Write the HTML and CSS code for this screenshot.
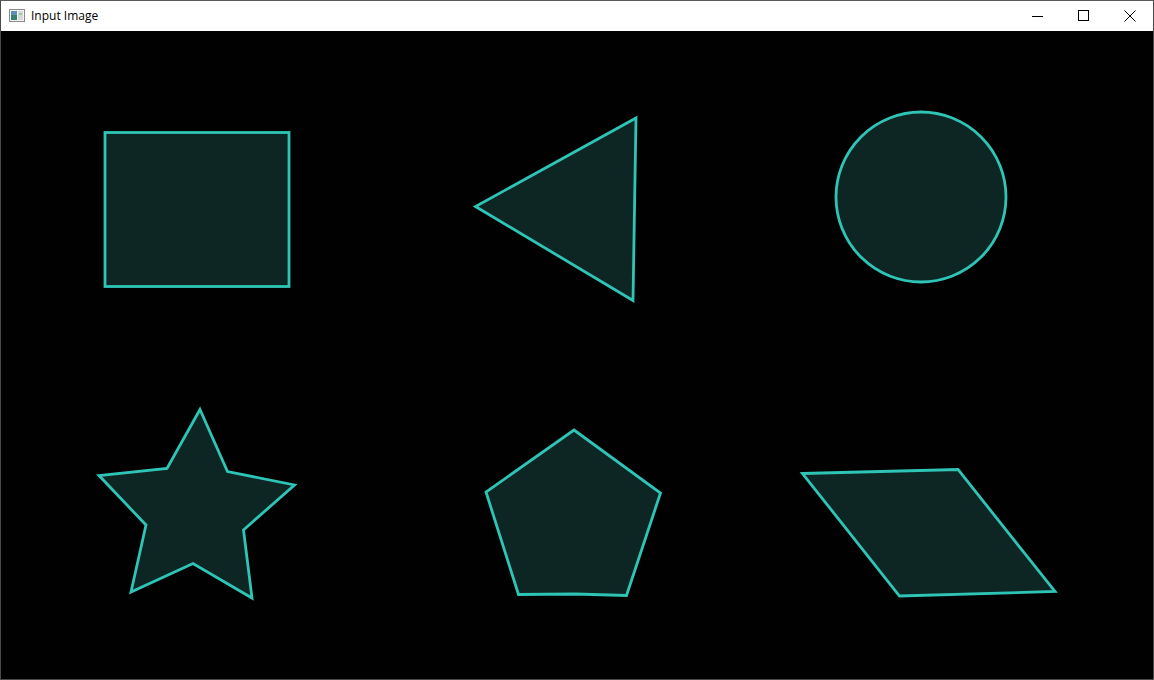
FILE: index.html
```html
<!DOCTYPE html>
<html>
<head>
<meta charset="utf-8">
<title>Input Image</title>
<link rel="stylesheet" href="styles.css">
</head>
<body>
<div class="window">
  <div class="titlebar">
    <div class="title">
      <svg class="app-icon" width="16" height="16" viewBox="0 0 16 16">
        <rect x="0.5" y="1.5" width="15" height="12" fill="#f4f4f4" stroke="#8a8a8a"/>
        <rect x="2" y="3" width="6" height="9" fill="#3b7f6e"/>
        <rect x="2" y="3" width="6" height="4" fill="#5e8fb8"/>
        <rect x="9" y="3" width="5" height="9" fill="#d8d8d8"/>
        <rect x="10" y="5" width="3" height="2" fill="#9bc79a"/>
      </svg>
      <span class="title-text">Input Image</span>
    </div>
    <div class="controls">
      <div class="ctl">
        <svg width="12" height="12" viewBox="0 0 12 12"><line x1="0" y1="6.5" x2="11" y2="6.5" stroke="#000" stroke-width="1"/></svg>
      </div>
      <div class="ctl">
        <svg width="12" height="12" viewBox="0 0 12 12"><rect x="0.5" y="0.5" width="10" height="10" fill="none" stroke="#000" stroke-width="1"/></svg>
      </div>
      <div class="ctl">
        <svg width="12" height="12" viewBox="0 0 12 12"><path d="M0.5 0.5 L11.5 11.5 M11.5 0.5 L0.5 11.5" stroke="#000" stroke-width="1"/></svg>
      </div>
    </div>
  </div>
  <div class="canvas">
    <svg class="shapes" width="1152" height="648" viewBox="1 31 1152 648">
      <g class="shape">
        <rect x="105" y="132.5" width="184" height="154"/>
        <polygon points="636,118 475.5,206.5 633,300.5"/>
        <circle cx="921" cy="197" r="85"/>
        <polygon points="200,409.5 227.5,471.5 294.5,485 243.5,530 252,598 193,563.5 131,592 146,525 99,475.5 167,468.5"/>
        <polygon points="574,430 660.5,493 626.5,595.5 575,594 518.5,594.5 486,492"/>
        <polygon points="802.5,473.5 958,469.5 1055,591.5 899.5,596"/>
      </g>
    </svg>
  </div>
</div>
</body>
</html>
```

FILE: styles.css
```css
html, body {
  margin: 0;
  padding: 0;
  background: #000;
}

.window {
  width: 1154px;
  height: 680px;
  box-sizing: border-box;
  border: 1px solid #4a4a4a;
  border-top-color: #5a5a5a;
  display: flex;
  flex-direction: column;
  overflow: hidden;
}

.titlebar {
  height: 30px;
  background: #ffffff;
  display: flex;
  align-items: stretch;
  justify-content: space-between;
  flex: none;
}

.title {
  display: flex;
  align-items: center;
  padding-left: 8px;
  gap: 6px;
}

.app-icon {
  display: block;
  margin-top: -1px;
}

.title-text {
  font-family: "Open Sans", "Noto Sans", "Liberation Sans", sans-serif;
  font-size: 12px;
  color: #000;
  margin-top: -1px;
}

.controls {
  display: flex;
}

.ctl {
  width: 46px;
  display: flex;
  align-items: center;
  justify-content: center;
}

.ctl svg {
  display: block;
}

.canvas {
  flex: 1;
  background: #010101;
}

.shapes {
  display: block;
}

.shape > * {
  fill: #0d2523;
  stroke: #2ec5b6;
  stroke-width: 2.8;
  stroke-linejoin: miter;
}
```
